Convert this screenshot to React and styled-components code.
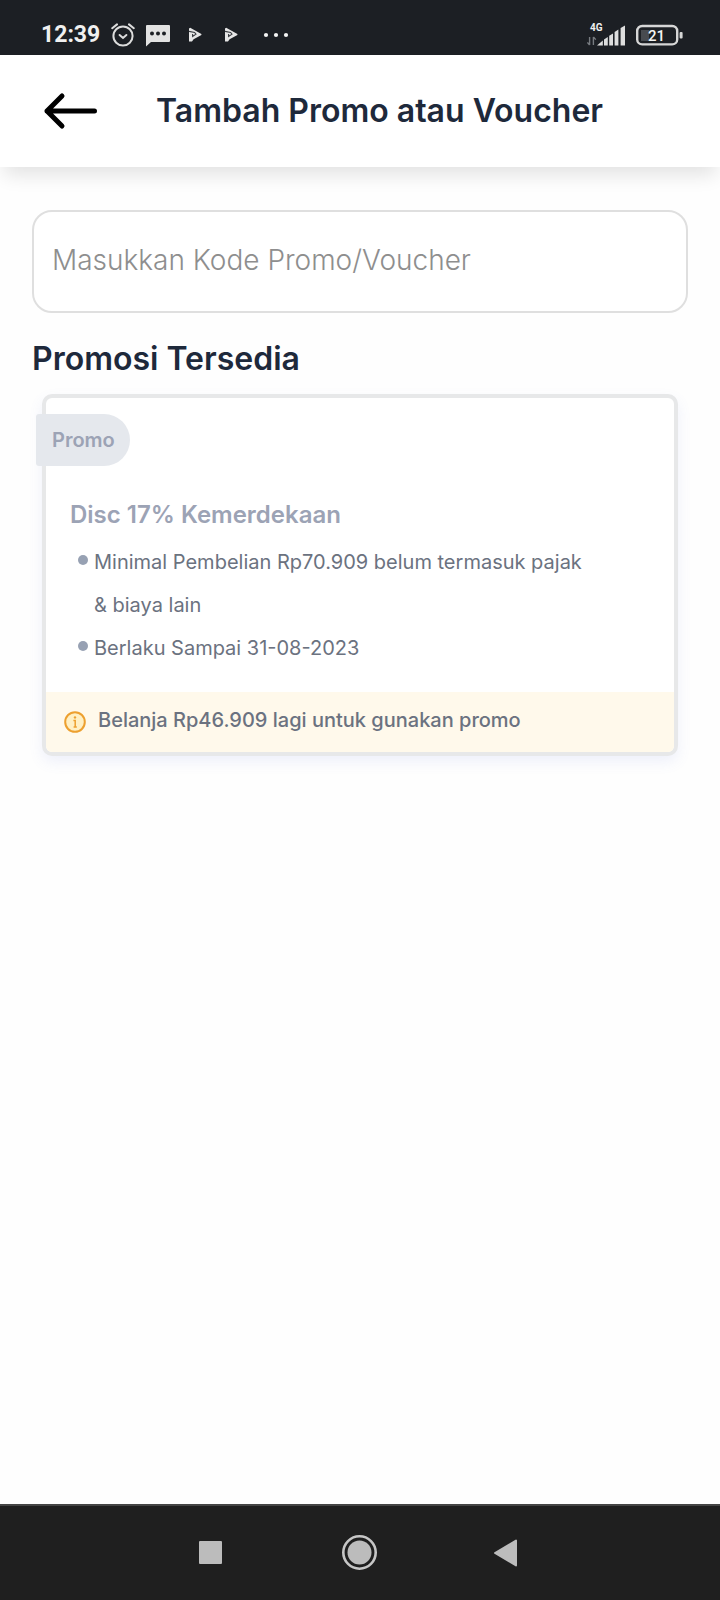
import React from "react";
import styled, { createGlobalStyle } from "styled-components";

const GlobalStyle = createGlobalStyle`
  *, *::before, *::after { box-sizing: border-box; }
  body {
    margin: 0;
    background: #fefefe;
    font-family: Inter, "Liberation Sans", sans-serif;
  }
  button { border: 0; padding: 0; background: none; cursor: pointer; }
  svg { display: block; flex: none; }
`;

const Screen = styled.div`
  display: flex;
  flex-direction: column;
  min-height: 100vh;
`;

const StatusBar = styled.div`
  display: flex;
  align-items: flex-end;
  justify-content: space-between;
  height: 55px;
  padding: 0 37px 7px 41px;
  background: #1c1f24;
  color: #f0f0f0;
`;

const StatusGroup = styled.div`
  display: flex;
  align-items: center;
  gap: ${(p) => p.$gap}px;
  height: 26px;
`;

const Clock = styled.time`
  font: 700 23px/26px Roboto, sans-serif;
`;

const Header = styled.header`
  display: flex;
  align-items: center;
  gap: 56px;
  height: 112px;
  padding: 0 40px;
  background: #fff;
  box-shadow: 0 12px 18px -4px rgba(0, 0, 0, 0.11);
`;

const BackButton = styled.button`
  width: 60px;
  height: 48px;
`;

const Title = styled.h1`
  margin: 0;
  font-size: 32px;
  font-weight: 600;
  line-height: 40px;
  color: #1e293b;
`;

const Content = styled.main`
  flex: 1;
  padding: 43px 32px;
`;

const CodeInput = styled.input`
  display: block;
  width: 100%;
  height: 103px;
  padding: 0 18px 4px;
  border: 2px solid #dfdfdf;
  border-radius: 20px;
  background: #fff;
  font: 300 28px/36px Inter, "Liberation Sans", sans-serif;
  color: #1e293b;
  &::placeholder { color: #8e8e8e; opacity: 1; }
`;

const SectionTitle = styled.h2`
  margin: 26px 0 15px;
  font-size: 32px;
  font-weight: 600;
  line-height: 40px;
  color: #1e293b;
`;

const Card = styled.article`
  margin: 0 10px;
  border: 4px solid #e7e8e9;
  border-radius: 10px;
  background: #fff;
  box-shadow: 0 6px 14px rgba(100, 120, 220, 0.1);
`;

const CardBody = styled.div`
  padding: 16px 24px 22px;
`;

const Badge = styled.span`
  display: block;
  width: max-content;
  margin-left: -34px;
  padding: 0 15px 0 16px;
  border-radius: 3px 26px 26px 3px;
  background: #e5e8ed;
  font-size: 20px;
  font-weight: 600;
  line-height: 52px;
  color: #9ca3b5;
`;

const PromoName = styled.h3`
  margin: 33px 0 10px;
  font-size: 24px;
  font-weight: 600;
  line-height: 32px;
  color: #9ca3b5;
`;

const Terms = styled.ul`
  margin: 0;
  padding: 0 60px 0 8px;
  list-style: none;
`;

const Term = styled.li`
  display: flex;
  gap: 6px;
  font-size: 20px;
  line-height: 43px;
  color: #6b7280;
  &::before {
    content: "";
    flex: none;
    width: 10px;
    height: 10px;
    margin-top: 14px;
    border-radius: 50%;
    background: #97a1b3;
  }
`;

const Notice = styled.p`
  display: flex;
  align-items: center;
  gap: 11px;
  height: 60px;
  margin: 0;
  padding: 0 17px;
  border-radius: 0 0 6px 6px;
  background: #fff9eb;
  font-size: 20px;
  font-weight: 500;
  line-height: 24px;
  color: #6b7280;
`;

const NoticeText = styled.span`
  padding-bottom: 4px;
`;

const NavBar = styled.nav`
  display: flex;
  justify-content: center;
  height: 96px;
  border-top: 2px solid #444;
  background: #1f1f1f;
`;

const NavButton = styled.button`
  display: grid;
  place-items: center;
  width: 148px;
`;

const AlarmIcon = () => (
  <svg width="24" height="24" viewBox="0 0 24 24" fill="none" stroke="#dcdcdc" strokeWidth="2" strokeLinecap="round">
    <circle cx="12" cy="13" r="9.6" />
    <path d="M1.2 5.2 6 1.4M22.8 5.2 18 1.4" />
    <path d="m8.6 12 3.4 3 3.4-3" />
  </svg>
);

const MessageIcon = () => (
  <svg width="24" height="24" viewBox="0 0 24 24">
    <path d="M1 2h22a1 1 0 0 1 1 1v15a1 1 0 0 1-1 1H5l-5 4.5V3a1 1 0 0 1 1-1Z" fill="#e2e2e2" />
    <g fill="#1c1f24">
      <circle cx="6" cy="10.5" r="2" />
      <circle cx="12" cy="10.5" r="2" />
      <circle cx="18" cy="10.5" r="2" />
    </g>
  </svg>
);

const PlayIcon = () => (
  <svg width="13" height="16" viewBox="0 0 13 16">
    <path d="M0 1.4 1.2 0.8 12.4 7 12.4 8 4.6 12.2 3 14.6H0Z" fill="#e6e6e6" />
    <path d="M0 4.4 5.6 5.4 7 7.2 3.6 9.4V7" fill="none" stroke="#3a3d42" strokeWidth="1.1" />
  </svg>
);

const MoreIcon = () => (
  <svg width="28" height="6" viewBox="0 0 28 6" fill="#f4f4f4">
    <circle cx="5" cy="3" r="2.1" />
    <circle cx="15" cy="3" r="2.1" />
    <circle cx="25" cy="3" r="2.1" />
  </svg>
);

const SignalIcon = () => (
  <svg width="40" height="26" viewBox="0 0 40 26">
    <text x="3" y="9" fill="#f0f0f0" fontFamily="Roboto, sans-serif" fontSize="10" fontWeight="700">4G</text>
    <path d="M2.6 15v8M0.4 20.4l2.2 2.6M6.4 23v-8M6.4 15l2.4 2.6" fill="none" stroke="#777b80" strokeWidth="1.4" />
    <g fill="#dedede">
      <path d="M10 23.5 15.8 18.4v5.1Z" />
      <path d="M17 17.4 20.8 15V23.5H17Z" />
      <path d="M22.2 13.8 26 11.4V23.5H22.2Z" />
      <path d="M27.6 10 31.4 7.4V23.5H27.6Z" />
      <path d="M33.6 6 38 3.6V23.5H33.6Z" />
    </g>
  </svg>
);

const BatteryIcon = () => (
  <svg width="47" height="26" viewBox="0 0 47 26">
    <rect x="1.2" y="4" width="40" height="18.4" rx="5" fill="none" stroke="#d6d6d6" strokeWidth="2.4" />
    <rect x="5" y="8" width="8" height="11" fill="#484b50" />
    <rect x="43.6" y="10" width="3" height="6.6" rx="1" fill="#d6d6d6" />
    <text x="20.5" y="18.6" textAnchor="middle" fill="#f4f4f4" fontFamily="Roboto, sans-serif" fontSize="15" fontWeight="500">21</text>
  </svg>
);

const ArrowIcon = () => (
  <svg width="60" height="48" viewBox="0 0 60 48" fill="none" stroke="#000" strokeWidth="5" strokeLinecap="round" strokeLinejoin="round">
    <path d="M54.5 24H7M22 9 7 24l15 15" />
  </svg>
);

const InfoIcon = () => (
  <svg width="24" height="24" viewBox="0 0 24 24" fill="none" stroke="#eda02f" strokeWidth="2">
    <circle cx="12" cy="12" r="9.8" fill="#fff0c4" />
    <path d="M10.4 10.4h1.8v6.3M10.6 17h3.2" strokeWidth="1.5" />
    <circle cx="12" cy="7.4" r="1.2" fill="#eda02f" stroke="none" />
  </svg>
);

export default function App() {
  return (
    <Screen>
      <GlobalStyle />
      <StatusBar>
        <StatusGroup $gap={19}>
          <StatusGroup $gap={11}>
            <Clock>12:39</Clock>
            <AlarmIcon />
            <MessageIcon />
          </StatusGroup>
          <StatusGroup $gap={23}>
            <PlayIcon />
            <PlayIcon />
            <MoreIcon />
          </StatusGroup>
        </StatusGroup>
        <StatusGroup $gap={9}>
          <SignalIcon />
          <BatteryIcon />
        </StatusGroup>
      </StatusBar>
      <Header>
        <BackButton type="button" aria-label="Kembali">
          <ArrowIcon />
        </BackButton>
        <Title>Tambah Promo atau Voucher</Title>
      </Header>
      <Content>
        <CodeInput type="text" aria-label="Kode Promo/Voucher" placeholder="Masukkan Kode Promo/Voucher" />
        <SectionTitle>Promosi Tersedia</SectionTitle>
        <Card>
          <CardBody>
            <Badge>Promo</Badge>
            <PromoName>Disc 17% Kemerdekaan</PromoName>
            <Terms>
              <Term>Minimal Pembelian Rp70.909 belum termasuk pajak &amp; biaya lain</Term>
              <Term>Berlaku Sampai 31-08-2023</Term>
            </Terms>
          </CardBody>
          <Notice>
            <InfoIcon />
            <NoticeText>Belanja Rp46.909 lagi untuk gunakan promo</NoticeText>
          </Notice>
        </Card>
      </Content>
      <NavBar>
        <NavButton type="button" aria-label="Aplikasi terkini">
          <svg width="28" height="36" viewBox="0 0 28 36">
            <rect x="1" y="6" width="23" height="23" rx="1" fill="#bcbcbc" />
          </svg>
        </NavButton>
        <NavButton type="button" aria-label="Beranda">
          <svg width="36" height="36" viewBox="0 0 36 36">
            <circle cx="17.5" cy="17.5" r="16.2" fill="none" stroke="#c6c6c6" strokeWidth="2.6" />
            <circle cx="17.5" cy="17.5" r="12" fill="#bcbcbc" />
          </svg>
        </NavButton>
        <NavButton type="button" aria-label="Kembali">
          <svg width="28" height="36" viewBox="0 0 28 36">
            <path d="M22 5.6V30.4L1 18Z" fill="#bcbcbc" stroke="#bcbcbc" strokeWidth="2" strokeLinejoin="round" />
          </svg>
        </NavButton>
      </NavBar>
    </Screen>
  );
}
